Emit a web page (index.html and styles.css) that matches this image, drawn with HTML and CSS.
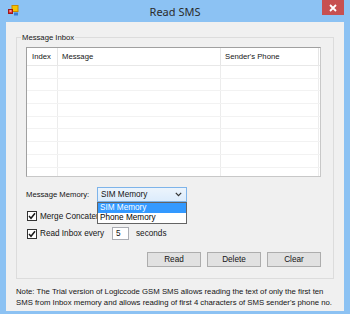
FILE: index.html
```html
<!DOCTYPE html>
<html>
<head>
<meta charset="utf-8">
<link rel="stylesheet" href="styles.css">
</head>
<body>
<div class="window">
  <div class="titlebar">
    <svg class="app-icon" width="11" height="11" viewBox="0 0 11 11">
      <rect x="4" y="0.5" width="6" height="6" fill="#f5c400" stroke="#c98a00" stroke-width="1"/>
      <rect x="0.5" y="4.5" width="4" height="4" fill="#e03030" stroke="#a01818" stroke-width="1"/>
      <rect x="6" y="7.5" width="4" height="3" fill="#3a7fd0"/>
      <rect x="1.5" y="5.5" width="2" height="1" fill="#ffffff"/>
    </svg>
    <div class="title">Read SMS</div>
    <div class="close">
      <svg width="8" height="8" viewBox="0 0 8 8"><path d="M1 1 L7 7 M7 1 L1 7" stroke="#ffffff" stroke-width="1.8"/></svg>
    </div>
  </div>
  <div class="client">
    <div class="group">
      <div class="group-label">Message Inbox</div>
      <div class="listview">
        <div class="lv-header">
          <div class="cell c1">Index</div>
          <div class="cell c2">Message</div>
          <div class="cell c3">Sender's Phone</div>
        </div>
        <div class="lv-body">
          <div class="row"><div class="cell c1"></div><div class="cell c2"></div><div class="cell c3"></div></div>
          <div class="row"><div class="cell c1"></div><div class="cell c2"></div><div class="cell c3"></div></div>
          <div class="row"><div class="cell c1"></div><div class="cell c2"></div><div class="cell c3"></div></div>
          <div class="row"><div class="cell c1"></div><div class="cell c2"></div><div class="cell c3"></div></div>
          <div class="row"><div class="cell c1"></div><div class="cell c2"></div><div class="cell c3"></div></div>
          <div class="row"><div class="cell c1"></div><div class="cell c2"></div><div class="cell c3"></div></div>
          <div class="row"><div class="cell c1"></div><div class="cell c2"></div><div class="cell c3"></div></div>
          <div class="row"><div class="cell c1"></div><div class="cell c2"></div><div class="cell c3"></div></div>
          <div class="row"><div class="cell c1"></div><div class="cell c2"></div><div class="cell c3"></div></div>
        </div>
      </div>
      <div class="memory-row">
        <span class="memory-label">Message Memory:</span>
        <div class="combo">
          <span class="combo-text">SIM Memory</span>
          <svg class="chevron" width="7" height="5" viewBox="0 0 7 5"><path d="M0.8 0.8 L3.5 3.6 L6.2 0.8" fill="none" stroke="#333333" stroke-width="1.2"/></svg>
          <div class="dropdown">
            <div class="opt selected">SIM Memory</div>
            <div class="opt">Phone Memory</div>
          </div>
        </div>
      </div>
      <div class="check-row first">
        <span class="checkbox"><svg width="8" height="8" viewBox="0 0 8 8"><path d="M1 4 L3 6.3 L7 1.2" fill="none" stroke="#1a1a1a" stroke-width="1.5"/></svg></span>
        <span class="merge-label">Merge Concatenated SMS</span>
      </div>
      <div class="check-row second">
        <span class="checkbox"><svg width="8" height="8" viewBox="0 0 8 8"><path d="M1 4 L3 6.3 L7 1.2" fill="none" stroke="#1a1a1a" stroke-width="1.5"/></svg></span>
        <span class="every-label">Read Inbox every</span>
        <span class="num-input">5</span>
        <span class="seconds">seconds</span>
      </div>
      <div class="buttons">
        <div class="btn">Read</div>
        <div class="btn">Delete</div>
        <div class="btn">Clear</div>
      </div>
    </div>
    <div class="note">Note: The Trial version of Logiccode GSM SMS allows reading the text of only the first ten SMS from Inbox memory and allows reading of first 4 characters of SMS sender's phone no.</div>
  </div>
</div>
</body>
</html>
```

FILE: styles.css
```css
* { box-sizing: border-box; }
html, body { margin: 0; padding: 0; }
body {
  width: 350px;
  height: 314px;
  overflow: hidden;
  font-family: "Liberation Sans", Arial, sans-serif;
  font-size: 7.7px;
  color: #141414;
}
.window {
  width: 350px;
  height: 314px;
  background: #8cc2f3;
  display: flex;
  flex-direction: column;
  padding: 0 6px 3px 6px;
}
.titlebar {
  height: 22px;
  display: grid;
  grid-template-columns: 1fr auto 1fr;
  align-items: start;
}
.app-icon {
  margin-top: 5px;
  margin-left: 2px;
}
.title {
  font-family: "Noto Sans", "Open Sans", sans-serif;
  font-size: 11px;
  line-height: 14px;
  margin-top: 5px;
  color: #2b2b2b;
}
.close {
  justify-self: end;
  width: 22px;
  height: 15px;
  background: #c75050;
  display: flex;
  align-items: center;
  justify-content: center;
}
.client {
  flex: 1;
  background: #f0f0f0;
  padding: 15px 10px 0 10px;
  display: flex;
  flex-direction: column;
}
.group {
  border: 1px solid #dcdcdc;
  height: 242px;
  padding: 9px 12px 11px 9px;
  display: flex;
  flex-direction: column;
}
.group-label {
  align-self: flex-start;
  height: 9px;
  line-height: 9px;
  margin-top: -14px;
  margin-left: -5px;
  margin-bottom: 5px;
  padding: 0 1px;
  background: #f0f0f0;
}
.listview {
  width: 295px;
  height: 130px;
  background: #ffffff;
  border: 1px solid #a0a0a0;
  border-right-color: #c8c8c8;
  border-bottom-color: #c8c8c8;
  overflow: hidden;
}
.lv-header {
  display: flex;
  height: 18px;
  border-bottom: 1px solid #e8e8e8;
  line-height: 17px;
}
.cell {
  border-right: 1px solid #ececec;
  flex: none;
}
.lv-header .cell { border-right-color: #e5e5e5; }
.c1 { width: 31px; padding-left: 5px; }
.c2 { width: 163px; padding-left: 4px; }
.c3 { width: 98px; padding-left: 4px; }
.row {
  display: flex;
  height: 12.7px;
  border-bottom: 1px solid #f2f2f2;
}
.memory-row {
  margin-top: 10px;
  height: 15px;
  display: flex;
  align-items: center;
}
.memory-label {
  width: 71px;
  flex: none;
}
.combo {
  position: relative;
  width: 90px;
  height: 15px;
  border: 1px solid #7eb4ea;
  background: linear-gradient(#ecf4fc, #dcecfc);
  display: flex;
  align-items: center;
  padding-left: 3px;
  font-size: 8.2px;
}
.combo-text { flex: 1; }
.chevron { margin-right: 4px; }
.dropdown {
  position: absolute;
  left: -1px;
  top: 14px;
  width: 90px;
  background: #ffffff;
  border: 1px solid #646464;
  font-size: 8.2px;
  z-index: 2;
}
.opt {
  height: 10px;
  line-height: 10px;
  padding-left: 2px;
  color: #000000;
}
.opt.selected {
  background: #3399ff;
  color: #ffffff;
}
.check-row {
  display: flex;
  align-items: center;
  padding-left: 1px;
}
.check-row.first { margin-top: 8px; height: 12px; }
.check-row.second { margin-top: 5px; height: 13px; }
.checkbox {
  width: 10px;
  height: 10px;
  border: 1px solid #333333;
  background: #ffffff;
  display: flex;
  align-items: center;
  justify-content: center;
  margin-right: 3px;
  flex: none;
}
.check-row span:not(.checkbox) { font-size: 8.2px; }
.merge-label {
  width: 57px;
  overflow: hidden;
  white-space: nowrap;
  flex: none;
}
.every-label { width: 72px; flex: none; }
.num-input {
  width: 17px;
  height: 13px;
  border: 1px solid #abadb3;
  background: #ffffff;
  padding-left: 3px;
  line-height: 11px;
  flex: none;
}
.seconds { margin-left: 7px; }
.buttons {
  margin-top: 12px;
  display: flex;
  justify-content: flex-end;
  gap: 6px;
}
.btn {
  width: 54px;
  height: 15px;
  border: 1px solid #adadad;
  background: #e1e1e1;
  display: flex;
  align-items: center;
  justify-content: center;
  font-size: 8.2px;
}
.note {
  margin-top: 7px;
  line-height: 11px;
  font-size: 7.75px;
}
```
